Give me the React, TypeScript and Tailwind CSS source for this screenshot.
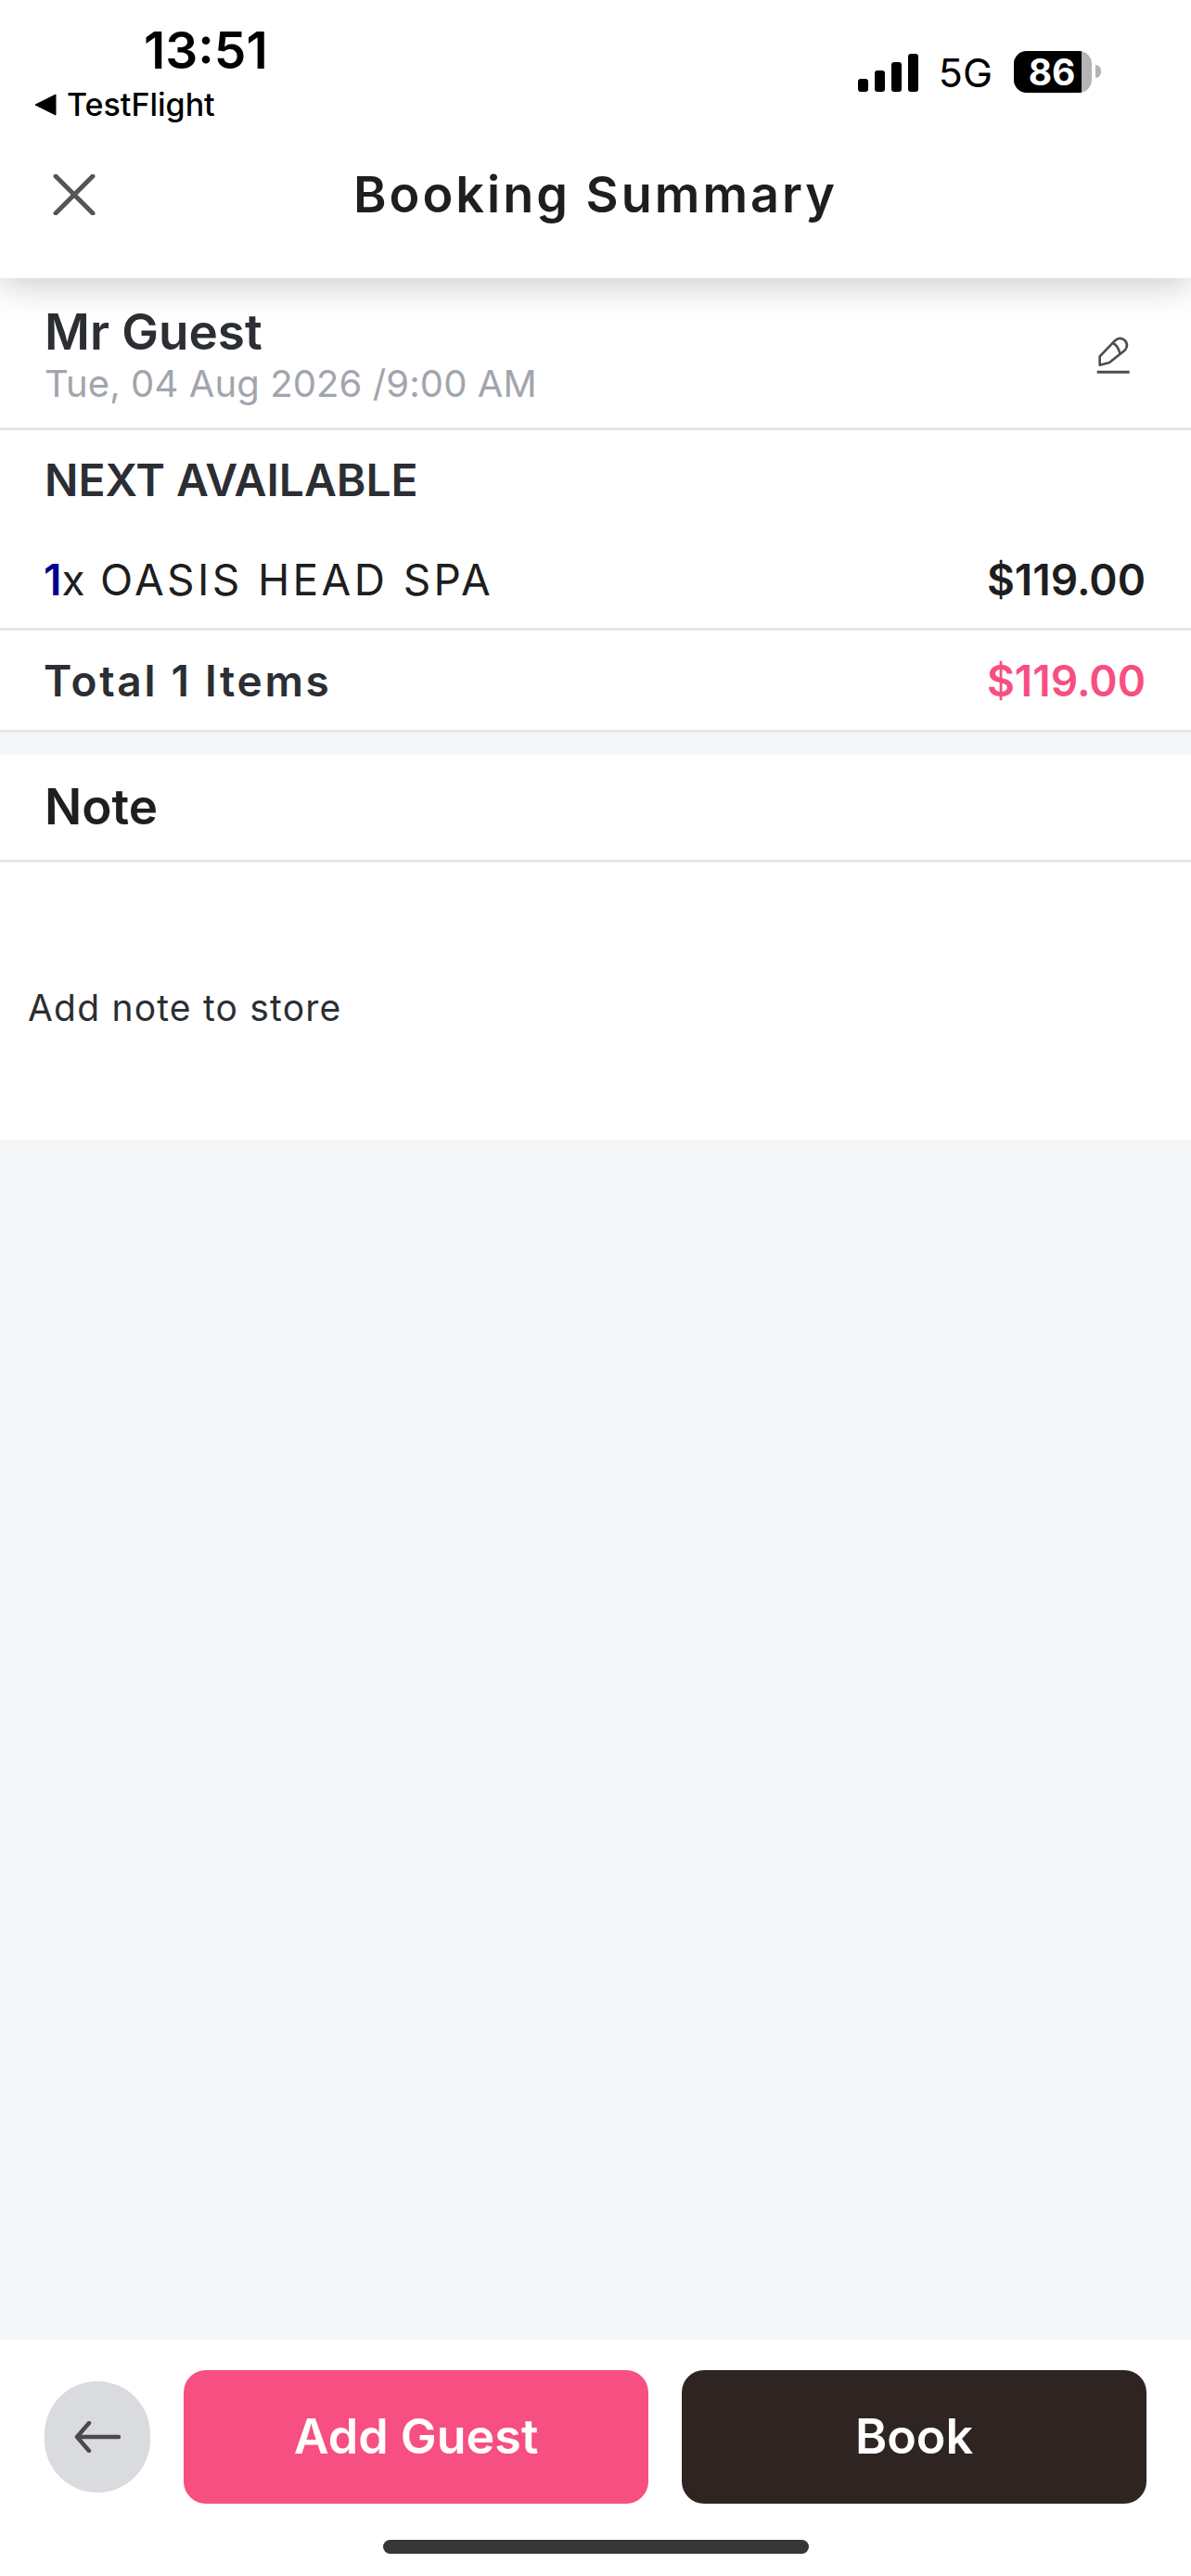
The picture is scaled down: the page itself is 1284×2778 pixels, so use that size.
import React from "react"

const sans = "font-['Inter','Liberation_Sans',sans-serif]"

function StatusBar() {
	return (
		<div className="flex h-[160px] items-start justify-between">
			<div className="flex flex-col pl-[37px]">
				<span className="ml-[118px] mt-[24px] text-[55px] leading-[60px] font-semibold text-black">
					13:51
				</span>
				<div className="mt-[9px] flex items-center gap-[11px]">
					<svg width="24" height="24" viewBox="0 0 24 24">
						<path d="M23 1 L23 23 L1 12 Z" fill="#000" stroke="#000" strokeLinejoin="round" />
					</svg>
					<span className="text-[34px] leading-[40px] font-medium text-black">TestFlight</span>
				</div>
			</div>
			<div className="mt-[53px] mr-[97px] flex items-center">
				<svg width="65" height="41" viewBox="0 0 65 41" className="mt-[2px]">
					<rect x="0" y="27" width="11" height="14" rx="3" fill="#000" />
					<rect x="18" y="18" width="11" height="23" rx="3" fill="#000" />
					<rect x="36" y="9" width="11" height="32" rx="3" fill="#000" />
					<rect x="54" y="0" width="11" height="41" rx="3" fill="#000" />
				</svg>
				<span className="ml-[22px] mt-[3px] text-[43px] leading-[45px] text-black">5G</span>
				<div className="ml-[23px] flex items-center">
					<div className="flex h-[45px] w-[84px] overflow-hidden rounded-[14px] bg-[#b4b4b4]">
						<div className="flex w-[73px] items-center justify-center bg-black pl-[9px] text-[39px] leading-none font-bold text-white">
							86
						</div>
					</div>
					<div className="ml-[4px] h-[14px] w-[6px] rounded-r-full bg-[#b4b4b4]" />
				</div>
			</div>
		</div>
	)
}

export default function App() {
	return (
		<div className={`${sans} flex h-[2778px] w-full flex-col bg-[#f5f6f8]`}>
			{/* header */}
			<header className="relative z-10 h-[300px] bg-white shadow-[0_8px_36px_rgba(0,0,0,0.2)]">
				<StatusBar />
				<div className="relative flex h-[100px] items-center justify-center">
					<svg width="46" height="44" viewBox="0 0 46 44" className="absolute top-[28px] left-[57px]">
						<path d="M3 2 L43 42 M43 2 L3 42" stroke="#555" strokeWidth="5" strokeLinecap="round" />
					</svg>
					<h1 className="text-[54px] leading-[64px] font-semibold tracking-[3px] text-[#1d1e20]">
						Booking Summary
					</h1>
				</div>
			</header>

			{/* guest */}
			<section className="flex h-[164px] items-start justify-between border-b-[3px] border-[#e6e6e6] bg-white pr-[64px] pl-[48px]">
				<div className="flex flex-col">
					<span className="mt-[28px] text-[53px] leading-[60px] font-semibold text-[#2b2e33]">Mr Guest</span>
					<span className="mt-[1px] text-[40px] leading-[50px] tracking-[0.1px] text-[#a1a5ad]">
						Tue, 04 Aug 2026 /9:00 AM
					</span>
				</div>
				<svg width="40" height="46" viewBox="90 55 120 138" className="mt-[60px]">
					<path
						d="M107 156 L107 128 L155 78 Q172 62 188 76 Q202 92 188 108 L138 148 Z M150 86 Q165 92 172 118"
						fill="none"
						stroke="#4a4d52"
						strokeWidth="8"
						strokeLinejoin="round"
					/>
					<path d="M98 179 L203 179" stroke="#4a4d52" strokeWidth="9" />
				</svg>
			</section>

			{/* items */}
			<section className="bg-white">
				<div className="flex h-[94px] items-center pt-[13px] pl-[48px]">
					<span className="text-[48px] leading-none font-semibold text-[#2b2e33]">NEXT AVAILABLE</span>
				</div>
				<div className="flex h-[122px] items-center justify-between border-b-[3px] border-[#e6e6e6] pt-[14px] pr-[49px] pl-[47px]">
					<span className="text-[46px] leading-none tracking-[3.4px] text-[#1d1e20]">
						<span className="tracking-[0px]">
							<span className="font-semibold text-[#00008b]">1</span>x
						</span>{" "}
						OASIS HEAD SPA
					</span>
					<span className="text-[46px] leading-none font-semibold text-[#1d1e20]">$119.00</span>
				</div>
				<div className="flex h-[110px] items-center justify-between border-b-[3px] border-[#e6e6e6] pr-[49px] pl-[47px]">
					<span className="text-[46px] leading-none font-semibold tracking-[2.7px] text-[#2b2e33]">
						Total 1 Items
					</span>
					<span className="text-[46px] leading-none font-semibold text-[#f74f82]">$119.00</span>
				</div>
			</section>

			{/* note */}
			<section className="mt-[24px] bg-white">
				<div className="flex h-[116px] items-center border-b-[3px] border-[#e6e6e6] pl-[48px]">
					<span className="text-[53px] leading-none font-semibold text-[#1d1e20]">Note</span>
				</div>
				<div className="flex h-[299px] items-center pt-[14px] pl-[30px]">
					<span className="text-[39px] leading-none tracking-[1.2px] text-[#2b2e33]">Add note to store</span>
				</div>
			</section>

			<div className="flex-1" />

			{/* bottom bar */}
			<footer className="flex h-[255px] flex-col bg-white pt-[33px]">
				<div className="flex h-[144px] items-center gap-[36px] pr-[48px] pl-[48px]">
					<div className="flex h-[120px] w-[114px] items-center justify-center rounded-full bg-[#dadbdf]">
						<svg width="50" height="34" viewBox="0 0 50 34">
							<path
								d="M48 17 L3 17 M16 2 L3 17 L16 32"
								fill="none"
								stroke="#4a4a4a"
								strokeWidth="4.5"
								strokeLinecap="round"
								strokeLinejoin="round"
							/>
						</svg>
					</div>
					<div className="flex h-[144px] flex-1 items-center justify-center rounded-[24px] bg-[#f74f82] text-[52px] font-semibold text-white">
						Add Guest
					</div>
					<div className="flex h-[144px] flex-1 items-center justify-center rounded-[24px] bg-[#2e2522] text-[52px] font-semibold text-white">
						Book
					</div>
				</div>
				<div className="mx-auto mt-[39px] h-[15px] w-[459px] rounded-full bg-[#363636]" />
			</footer>
		</div>
	)
}
